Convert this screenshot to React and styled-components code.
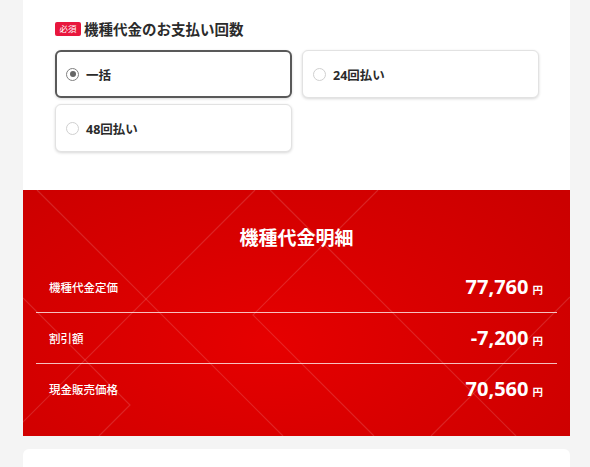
import React from 'react';
import styled, { createGlobalStyle } from 'styled-components';

const GlobalStyle = createGlobalStyle`
  html, body { margin: 0; padding: 0; background: #f4f4f4; }
  body {
    font-family: "Noto Sans", "Noto Sans CJK JP", sans-serif;
    color: #333;
    overflow: hidden;
  }
  * { box-sizing: border-box; }
`;

const linesSvg = `<svg xmlns='http://www.w3.org/2000/svg' viewBox='0 0 547 246' width='547' height='246' preserveAspectRatio='none'>
<g fill='none' stroke='rgba(255,255,255,0.14)' stroke-width='1.2'>
<line x1='14' y1='0' x2='260' y2='246'/>
<line x1='232' y1='0' x2='-14' y2='246'/>
<polyline points='0,108 107,215 76,246'/>
<polyline points='355,0 230,125 351,246'/>
<line x1='247' y1='0' x2='493' y2='246'/>
<line x1='547' y1='107' x2='408' y2='246'/>
</g></svg>`;
const linesUri = `url("data:image/svg+xml,${encodeURIComponent(linesSvg)}")`;

const Page = styled.main`
  width: 590px;
  padding: 0 20px 0 23px;
`;

const Card = styled.section`
  width: 547px;
  background: #fff;
  overflow: hidden;
`;

const PaymentSection = styled.div`
  padding: 19px 31px 38px 32px;
`;

const Heading = styled.h2`
  margin: 0 0 11px;
  display: flex;
  align-items: center;
  gap: 3px;
  font-size: 14.5px;
  line-height: 20px;
  font-weight: 700;
  color: #2b2b2b;
`;

const Badge = styled.span`
  display: inline-flex;
  align-items: center;
  justify-content: center;
  width: 26px;
  height: 14px;
  border-radius: 2px;
  background: #e8173d;
  color: #fff;
  font-size: 8.5px;
  font-weight: 400;
  line-height: 1;
`;

const Options = styled.div`
  display: grid;
  grid-template-columns: 1fr 1fr;
  column-gap: 10px;
  row-gap: 6px;
`;

const Option = styled.label`
  display: flex;
  align-items: center;
  gap: 7px;
  height: 48px;
  border-radius: 6px;
  background: #fff;
  border: ${p => (p.$selected ? '2px solid #595959' : '1px solid #e2e2e2')};
  padding-left: ${p => (p.$selected ? '9px' : '10px')};
  box-shadow: 0 1px 3px rgba(0, 0, 0, 0.16);
  font-size: 12.5px;
  font-weight: 700;
  color: #2b2b2b;
  cursor: pointer;
`;

const Radio = styled.span`
  width: 13px;
  height: 13px;
  border-radius: 50%;
  border: ${p => (p.$checked ? '1.5px solid #808080' : '1.5px solid #d0d0d0')};
  background: #fff;
  flex: none;
  display: flex;
  align-items: center;
  justify-content: center;
  &::after {
    content: '';
    width: 6px;
    height: 6px;
    border-radius: 50%;
    background: ${p => (p.$checked ? '#666' : 'transparent')};
  }
`;

const Detail = styled.div`
  padding: 36px 13px 22px;
  background-image: ${linesUri},
    radial-gradient(ellipse 70% 90% at 45% 62%, #e60000 0%, #d90000 45%, #cb0000 100%);
  background-size: 100% 100%, 100% 100%;
  color: #fff;
`;

const DetailTitle = styled.h3`
  margin: 0 0 12px;
  text-align: center;
  font-size: 19px;
  line-height: 24px;
  font-weight: 700;
`;

const Row = styled.div`
  display: flex;
  align-items: center;
  justify-content: space-between;
  height: ${p => (p.$last ? '50px' : '51px')};
  padding: 0 14px 0 13px;
  border-bottom: ${p => (p.$last ? 'none' : '1px solid rgba(255,255,255,0.75)')};
`;

const RowLabel = styled.span`
  font-size: 11.5px;
  font-weight: 500;
`;

const Price = styled.span`
  display: flex;
  align-items: baseline;
  gap: 4px;
`;

const Amount = styled.span`
  font-size: 20px;
  font-weight: 700;
  line-height: 1;
`;

const Yen = styled.span`
  font-size: 10.5px;
  font-weight: 700;
`;

const NextCard = styled.section`
  width: 547px;
  height: 120px;
  margin-top: 13px;
  background: #fff;
  border-radius: 6px;
`;

const options = [
  { label: '一括', selected: true },
  { label: '24回払い' },
  { label: '48回払い' },
];

const rows = [
  { label: '機種代金定価', value: '77,760' },
  { label: '割引額', value: '-7,200' },
  { label: '現金販売価格', value: '70,560' },
];

export default function App() {
  return (
    <>
      <GlobalStyle />
      <Page>
        <Card>
          <PaymentSection>
            <Heading>
              <Badge>必須</Badge>
              機種代金のお支払い回数
            </Heading>
            <Options>
              {options.map(o => (
                <Option key={o.label} $selected={o.selected}>
                  <Radio $checked={o.selected} />
                  {o.label}
                </Option>
              ))}
            </Options>
          </PaymentSection>
          <Detail>
            <DetailTitle>機種代金明細</DetailTitle>
            {rows.map((r, i) => (
              <Row key={r.label} $last={i === rows.length - 1}>
                <RowLabel>{r.label}</RowLabel>
                <Price>
                  <Amount>{r.value}</Amount>
                  <Yen>円</Yen>
                </Price>
              </Row>
            ))}
          </Detail>
        </Card>
        <NextCard />
      </Page>
    </>
  );
}
